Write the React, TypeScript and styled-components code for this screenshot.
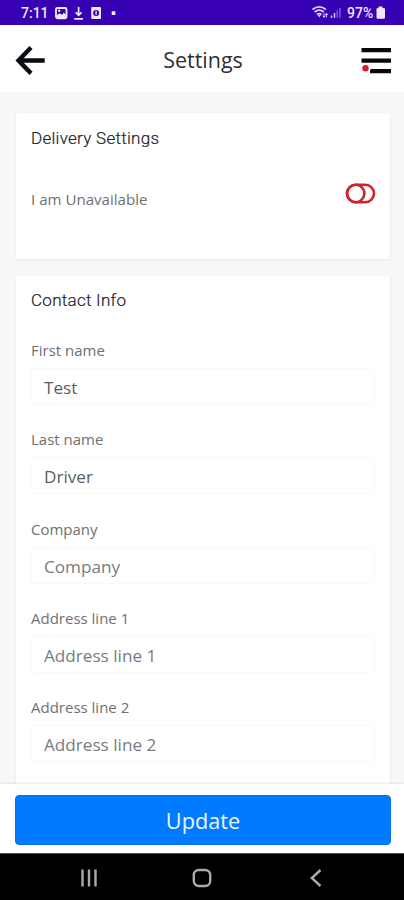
import React from "react";
import styled, { createGlobalStyle } from "styled-components";

const GlobalStyle = createGlobalStyle`
  * { box-sizing: border-box; }
  body { margin: 0; background: #f7f7f7; font-family: "Open Sans", sans-serif; }
`;

const Screen = styled.div`
  display: flex;
  flex-direction: column;
  width: 404px;
  height: 900px;
  overflow: hidden;
  background: #f7f7f7;
`;

const StatusBar = styled.div`
  display: flex;
  justify-content: space-between;
  flex: none;
  height: 25px;
  padding: 0 18px 0 21px;
  background: #3800b3;
  color: #eee8fb;
`;

const StatusGroup = styled.div`
  display: flex;
  align-items: center;
`;

const StatusText = styled.span<{ $width: number }>`
  width: ${(p) => p.$width}px;
  padding-top: 1px;
  font: 500 14px/25px Roboto, sans-serif;
  white-space: nowrap;
`;

const SignalGroup = styled.div`
  display: flex;
  svg { overflow: visible; }
`;

const Header = styled.header`
  display: grid;
  grid-template-columns: 32px 1fr 32px;
  align-items: center;
  flex: none;
  height: 67px;
  padding: 0 12px 0 14px;
  background: #fff;
`;

const Title = styled.h1`
  margin: 0;
  padding-top: 2px;
  text-align: center;
  font-size: 21.5px;
  font-weight: 400;
  line-height: 30px;
  color: #303030;
`;

const Content = styled.main`
  display: flex;
  flex-direction: column;
  flex: 1;
  gap: 17px;
  min-height: 0;
  padding: 21px 14px 0 16px;
  overflow: hidden;
`;

const Card = styled.section<{ $height: number; $top?: number }>`
  flex: none;
  height: ${(p) => p.$height}px;
  padding: ${(p) => p.$top ?? 13}px 15px 0;
  border-radius: 3px;
  background: #fff;
  box-shadow: 0 1px 3px rgba(0, 0, 0, 0.07);
`;

const CardTitle = styled.h2`
  height: 37px;
  margin: 0;
  border-bottom: 1px solid #fcfcfc;
  font: 300 17px/24px Roboto, sans-serif;
  letter-spacing: 0.28px;
  color: #101216;
  -webkit-text-stroke: 0.2px #30343a;
`;

const ToggleRow = styled.div`
  display: flex;
  justify-content: space-between;
  align-items: flex-start;
  padding-top: 20px;
`;

const ToggleLabel = styled.span`
  padding-top: 6px;
  font-size: 15.1px;
  line-height: 20px;
  color: #707070;
`;

const ToggleButton = styled.button`
  display: flex;
  margin: 0 -1px 0 0;
  padding: 0;
  border: 0;
  background: none;
`;

const Fields = styled.div`
  display: flex;
  flex-direction: column;
  padding-top: 15px;
`;

const Field = styled.label`
  display: block;
  height: 89.3px;
`;

const FieldLabel = styled.span`
  display: block;
  height: 28px;
  font-size: 15px;
  line-height: 20px;
  color: #707070;
`;

const Input = styled.input`
  display: block;
  width: 344px;
  height: 37px;
  padding: 2px 12px 0;
  border: 1px solid #f9f9f9;
  border-radius: 3px;
  background: #fff;
  outline: none;
  font-family: "Open Sans", sans-serif;
  font-size: 17.15px;
  color: #5b5d5f;
  &::placeholder { color: #787c80; opacity: 1; }
`;

const Footer = styled.footer`
  flex: none;
  height: 69px;
  padding: 11px 13px 0 15px;
  background: #fff;
  box-shadow: 0 -1px 2px rgba(0, 0, 0, 0.09);
  z-index: 1;
`;

const UpdateButton = styled.button`
  display: block;
  width: 100%;
  height: 50px;
  padding: 1px 0 0;
  border: 1px solid #0071ee;
  border-radius: 4px;
  background: #007aff;
  color: #eef6ff;
  font: 400 21.7px/47px "Open Sans", sans-serif;
`;

const NavBar = styled.nav`
  display: grid;
  grid-template-columns: 1fr 26px 1fr;
  align-items: center;
  justify-items: center;
  flex: none;
  height: 47px;
  padding: 1px 32px 0;
  border-top: 1px solid #555;
  background: #000;
`;

const NavIcon = styled.svg<{ $shift?: number }>`
  margin-left: ${(p) => p.$shift ?? 0}px;
  fill: none;
  stroke: #aaa;
  stroke-width: 2.4;
`;

const fields = [
  { label: "First name", value: "Test" },
  { label: "Last name", value: "Driver" },
  { label: "Company", value: "" },
  { label: "Address line 1", value: "" },
  { label: "Address line 2", value: "" },
];

function NotificationIcons() {
  return (
    <svg width="66" height="25" viewBox="0 0 66 25" fill="none" stroke="#eee8fb">
      <rect x="2" y="8" width="10.5" height="10.2" rx="1.5" strokeWidth="1.9" />
      <path d="M2.5 15.5l3-2.2 2.3 1.4 2-2 2.7 2.5v2.9h-10z" fill="#eee8fb" stroke="none" />
      <circle cx="5.2" cy="10.8" r="1.2" fill="#eee8fb" stroke="none" />
      <path d="M24.6 7v8M21.7 12.3l2.9 3 2.9-3M20.3 18.9h8.6" strokeWidth="1.7" />
      <rect x="37.2" y="7" width="9.8" height="12" rx="1" fill="#eee8fb" stroke="none" />
      <circle cx="42.1" cy="13" r="3" fill="#3800b3" stroke="none" />
      <path d="M42.1 11v3.7" strokeWidth="1.3" />
      <rect x="57.7" y="11.2" width="3.7" height="3.7" rx=".5" fill="#eee8fb" stroke="none" />
    </svg>
  );
}

function SignalIcons() {
  return (
    <svg width="32" height="25" viewBox="0 0 32 25" fill="none" stroke="#ddd0f4">
      <path d="M-2.5 9.5Q4.2 4.2 10.9 9.5M-.5 12Q4.2 8.3 8.9 12M1.9 14.5q2.3-1.8 4.6 0" strokeWidth="1.7" />
      <path d="M2.7 15h3.2l-1.6 2.5z" fill="#ddd0f4" stroke="none" />
      <path d="M9 13.2v4.2M11.5 13.2v4.2M7.7 15.7L9 17.3l1.3-1.6M10.2 14.9l1.3-1.6 1.3 1.6" strokeWidth="1" />
      <path d="M16.5 15.5v2.2M19.5 13v4.7" strokeWidth="1.5" />
      <path d="M22.2 10.5v7.2M25 8v9.7" stroke="#9076d1" strokeWidth="1.2" />
    </svg>
  );
}

export default function App() {
  return (
    <>
      <GlobalStyle />
      <Screen>
        <StatusBar>
          <StatusGroup>
            <StatusText $width={33}>7:11</StatusText>
            <NotificationIcons />
          </StatusGroup>
          <StatusGroup>
            <SignalGroup>
              <SignalIcons />
            </SignalGroup>
            <StatusText $width={28}>97%</StatusText>
            <svg width="11" height="25" viewBox="0 0 11 25">
              <path d="M3.5 6.5h4V8h1q1.5 0 1.5 1v8.7q0 1-1.5 1H3q-1.5 0-1.5-1V9q0-1 1.5-1h.5z" fill="#eee8fb" />
            </svg>
          </StatusGroup>
        </StatusBar>
        <Header>
          <svg width="32" height="32" viewBox="0 0 32 32" fill="none" stroke="#080c10" strokeWidth="4.4">
            <path d="M30.7 17.5H4M17 4.4L4.5 17.5 17 30.4" />
          </svg>
          <Title>Settings</Title>
          <svg width="32" height="32" viewBox="0 0 32 32">
            <path d="M1.5 7.2H31M1.5 17.7H31M10 28.2H31" stroke="#080808" strokeWidth="4.2" />
            <circle cx="5.5" cy="25.3" r="5.2" fill="#fff" />
            <circle cx="5.5" cy="25.3" r="3.2" fill="#de1721" />
          </svg>
        </Header>
        <Content>
          <Card $height={146}>
            <CardTitle>Delivery Settings</CardTitle>
            <ToggleRow>
              <ToggleLabel>I am Unavailable</ToggleLabel>
              <ToggleButton type="button" aria-label="Availability">
                <svg width="31" height="21" viewBox="0 0 31 21" fill="none" stroke="#d4202b" strokeWidth="2.6">
                  <rect x="2" y="1.8" width="27" height="17.4" rx="8.7" />
                  <circle cx="10.7" cy="10.5" r="8.7" />
                </svg>
              </ToggleButton>
            </ToggleRow>
          </Card>
          <Card $height={600} $top={12}>
            <CardTitle>Contact Info</CardTitle>
            <Fields>
              {fields.map((f) => (
                <Field key={f.label}>
                  <FieldLabel>{f.label}</FieldLabel>
                  <Input defaultValue={f.value} placeholder={f.label} />
                </Field>
              ))}
            </Fields>
          </Card>
        </Content>
        <Footer>
          <UpdateButton type="button">Update</UpdateButton>
        </Footer>
        <NavBar>
          <NavIcon $shift={-44} width="20" height="20" viewBox="0 0 20 20">
            <path d="M3.5 1.5v17M10 1.5v17M16.5 1.5v17" />
          </NavIcon>
          <NavIcon width="20" height="20" viewBox="0 0 20 20">
            <rect x="1.8" y="2" width="16.4" height="16" rx="5" />
          </NavIcon>
          <NavIcon $shift={44} width="20" height="20" viewBox="0 0 20 20">
            <path d="M14.5 2L5.8 10l8.7 8" />
          </NavIcon>
        </NavBar>
      </Screen>
    </>
  );
}
